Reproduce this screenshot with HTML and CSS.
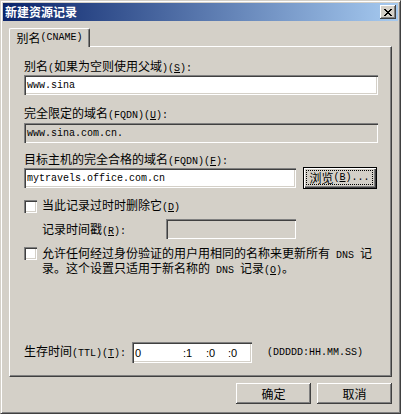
FILE: index.html
```html
<!DOCTYPE html>
<html>
<head>
<meta charset="utf-8">
<link rel="stylesheet" href="styles.css">
</head>
<body>
<div class="window">
  <div class="titlebar">
    <span class="title">新建资源记录</span>
    <span class="close"><svg width="8" height="7" viewBox="0 0 8 7" shape-rendering="crispEdges"><path d="M0 0h2v1H0z M6 0h2v1H6z M1 1h2v1H1z M5 1h2v1H5z M2 2h4v1H2z M3 3h2v1H3z M2 4h4v1H2z M1 5h2v1H1z M5 5h2v1H5z M0 6h2v1H0z M6 6h2v1H6z" fill="#000"/></svg></span>
  </div>
  <div class="tabs">
    <div class="tabstrip"><div class="tab">别名<span class="m">(CNAME)</span></div></div>
    <div class="panel">
      <div class="label">别名<span class="m">(</span>如果为空则使用父域<span class="m">)(<u>S</u>):</span></div>
      <div class="field f1"><span class="m">www.sina</span></div>
      <div class="label l2">完全限定的域名<span class="m">(FQDN)(<u>U</u>):</span></div>
      <div class="field disabled f2"><span class="m">www.sina.com.cn.</span></div>
      <div class="label l3">目标主机的完全合格的域名<span class="m">(FQDN)(<u>F</u>):</span></div>
      <div class="row r3">
        <div class="field f3"><span class="m">mytravels.office.com.cn</span></div>
        <div class="browse"><span class="focus">浏览<span class="m">(<u>B</u>)...</span></span></div>
      </div>
      <div class="row cbrow">
        <span class="checkbox"></span>
        <span class="cblabel">当此记录过时时删除它<span class="m">(<u>D</u>)</span></span>
      </div>
      <div class="row tsrow">
        <span class="tslabel">记录时间戳<span class="m">(<u>R</u>):</span></span>
        <div class="field disabled f4"></div>
      </div>
      <div class="row cbrow2">
        <span class="checkbox"></span>
        <span class="cblabel multi">允许任何经过身份验证的用户用相同的名称来更新所有<span class="m"> DNS </span>记<br>录。这个设置只适用于新名称的<span class="m"> DNS </span>记录<span class="m">(<u>O</u>)</span>。</span>
      </div>
      <div class="row ttlrow">
        <span class="ttllabel">生存时间<span class="m">(TTL)(<u>T</u>):</span></span>
        <div class="field ttl"><span class="seg s1">0</span><span class="seg s2">:1</span><span class="seg s3">:0</span><span class="seg">:0</span></div>
        <span class="m fmt">(DDDDD:HH.MM.SS)</span>
      </div>
    </div>
  </div>
  <div class="buttons">
    <div class="btn">确定</div>
    <div class="btn">取消</div>
  </div>
</div>
</body>
</html>
```
FILE: styles.css
```css
html, body {
  margin: 0;
  padding: 0;
  background: #ffffff;
}
body {
  font-family: "Noto Sans CJK SC", "Liberation Sans", sans-serif;
  font-size: 12px;
  color: #000;
}
.window {
  box-sizing: border-box;
  width: 401px;
  height: 414px;
  background: #d4d0c8;
  border: 1px solid;
  border-color: #d4d0c8 #404040 #404040 #d4d0c8;
  box-shadow: inset 1px 1px #ffffff, inset -1px -1px #808080;
  padding: 2px;
  display: flex;
  flex-direction: column;
}
.titlebar {
  height: 18px;
  background: linear-gradient(to right, #0a246a, #a6caf0);
  display: flex;
  align-items: center;
  justify-content: space-between;
  padding: 0 2px 0 2px;
}
.title {
  color: #fff;
  font-weight: bold;
  font-size: 12px;
  line-height: 14px;
}
.close {
  box-sizing: border-box;
  width: 16px;
  height: 14px;
  background: #d4d0c8;
  box-shadow: inset -1px -1px #404040, inset 1px 1px #ffffff, inset -2px -2px #808080;
  display: flex;
  align-items: center;
  justify-content: center;
}
.close svg { display: block; margin-left: -1px; }
.m {
  font-family: "Liberation Mono", monospace;
  font-size: 10px;
}
.tabs {
  margin: 7px 6px 0 6px;
}
.tabstrip {
  display: flex;
}
.tab {
  position: relative;
  z-index: 1;
  box-sizing: border-box;
  width: 81px;
  height: 19px;
  margin-bottom: -1px;
  background: #d4d0c8;
  border-top: 1px solid #fff;
  border-left: 1px solid #fff;
  border-right: 1px solid #404040;
  border-top-left-radius: 2px;
  border-top-right-radius: 2px;
  box-shadow: inset -1px 0 #808080;
  display: flex;
  align-items: center;
  justify-content: center;
  line-height: 14px;
}
.panel {
  box-sizing: border-box;
  height: 331px;
  border: 1px solid;
  border-color: #fff #404040 #404040 #fff;
  box-shadow: inset -1px -1px #808080;
  padding: 12px 13px 13px 14px;
  display: flex;
  flex-direction: column;
}
.label {
  line-height: 14px;
  height: 14px;
  white-space: nowrap;
}
.l2 { margin-top: 11px; }
.l3 { margin-top: 9px; }
.field {
  box-sizing: border-box;
  height: 20px;
  background: #fff;
  box-shadow: inset 1px 1px #808080, inset 2px 2px #404040, inset -1px -1px #ffffff, inset -2px -2px #d4d0c8;
  display: flex;
  align-items: center;
  padding: 0 3px;
  white-space: nowrap;
}
.field.disabled { background: #d4d0c8; }
.f1 { margin-top: 2px; }
.f2 { margin-top: 3px; }
.row {
  display: flex;
  align-items: center;
}
.r3 {
  margin-top: 1px;
  height: 22px;
  gap: 7px;
}
.f3 { width: 272px; }
.browse {
  box-sizing: border-box;
  width: 74px;
  height: 22px;
  border: 1px solid #000;
  box-shadow: inset 1px 1px #fff, inset -1px -1px #404040, inset -2px -2px #808080;
  padding: 2px 3px 3px 2px;
  display: flex;
}
.browse .focus {
  flex: 1;
  border: 1px dotted #000;
  display: flex;
  align-items: center;
  justify-content: center;
  line-height: 14px;
}
.checkbox {
  box-sizing: border-box;
  width: 13px;
  height: 13px;
  flex: none;
  background: #fff;
  box-shadow: inset 1px 1px #808080, inset 2px 2px #404040, inset -1px -1px #ffffff, inset -2px -2px #d4d0c8;
}
.cbrow {
  margin-top: 10px;
  height: 14px;
  gap: 5px;
}
.cblabel {
  line-height: 14px;
  white-space: nowrap;
}
.tsrow {
  margin-top: 6px;
  height: 20px;
  padding-left: 18px;
}
.tslabel {
  width: 124px;
  line-height: 14px;
  padding-top: 2px;
}
.f4 { width: 130px; }
.cbrow2 {
  margin-top: 8px;
  align-items: flex-start;
  gap: 5px;
}
.cblabel.multi {
  line-height: 12px;
}
.ttlrow {
  margin-top: auto;
  height: 21px;
}
.ttllabel {
  width: 108px;
  line-height: 14px;
  white-space: nowrap;
}
.field.ttl {
  width: 120px;
  height: 21px;
  font-family: "Liberation Sans", sans-serif;
  font-size: 11px;
}
.seg { display: inline-block; }
.s1 { width: 48px; }
.s2 { width: 23px; }
.s3 { width: 22px; }
.fmt {
  margin-left: 15px;
}
.buttons {
  display: flex;
  justify-content: flex-end;
  gap: 6px;
  margin: 6px 6px 0 0;
}
.btn {
  box-sizing: border-box;
  width: 75px;
  height: 21px;
  box-shadow: inset -1px -1px #404040, inset 1px 1px #ffffff, inset -2px -2px #808080;
  display: flex;
  align-items: center;
  justify-content: center;
  line-height: 14px;
}
```
